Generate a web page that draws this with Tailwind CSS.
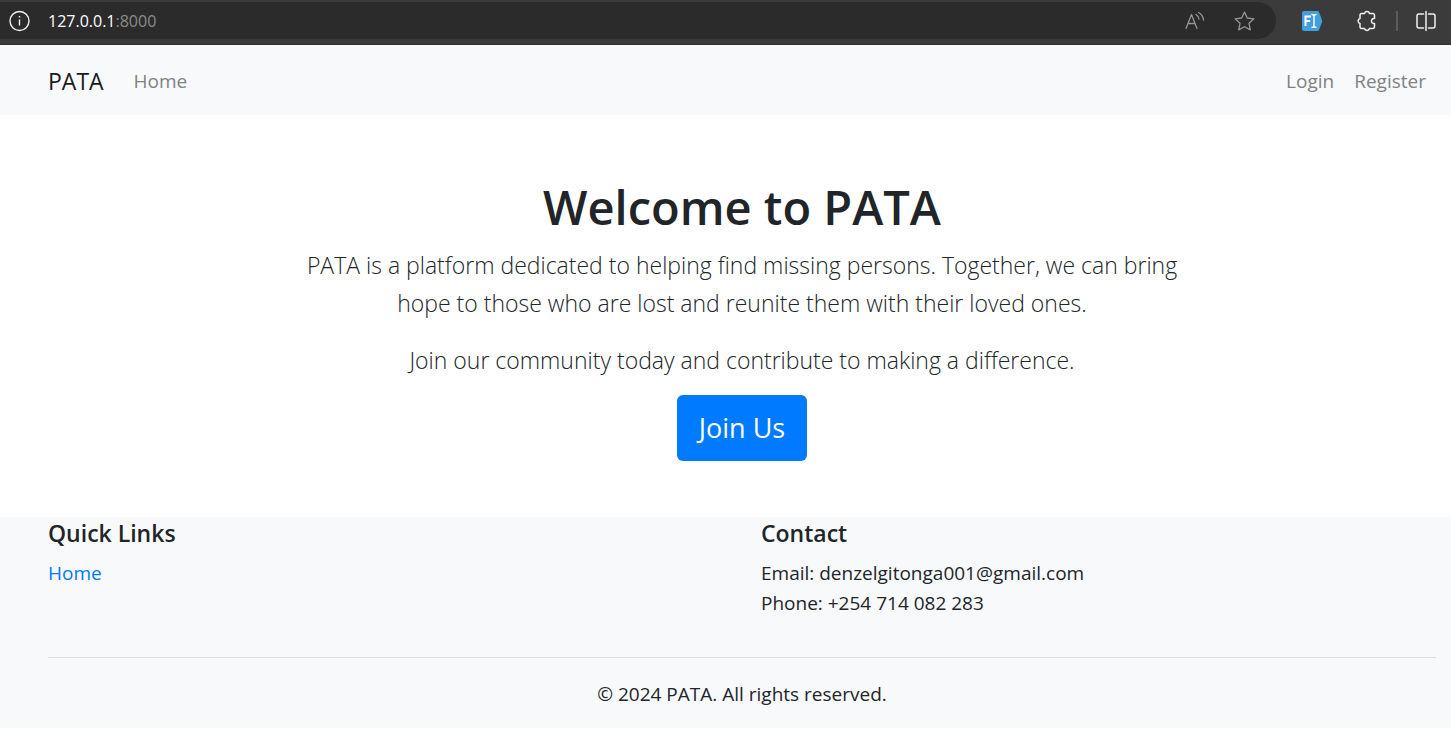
<!DOCTYPE html>
<html lang="en">
<head>
<meta charset="utf-8">
<title>PATA</title>
<script src="https://cdn.jsdelivr.net/npm/@tailwindcss/browser@4"></script>
</head>
<body class="bg-white font-['Segoe_UI','Open_Sans',sans-serif] text-[19px] leading-[30px] text-[#212529]">
  <div class="flex h-[45px] items-start justify-between border-b border-[#303030] bg-[#3b3b3b] pt-0.5 pr-3.5 text-[#f0f0f0]">
    <div class="flex h-[37px] grow items-center rounded-r-full bg-[#2b2b2b] pr-5 pl-2">
      <button type="button" aria-label="Site information">
        <svg class="size-[22px]" viewBox="0 0 22 22" fill="none" stroke="currentColor" stroke-width="1.4"><circle cx="11.500" cy="11" r="9.5"/><path d="M11.500 9.5v6M11.500 6v1.6"/></svg>
      </button>
      <div class="ml-[18px] grow text-base text-[#8c8c8c]"><span class="text-white">127.0.0.1</span>:8000</div>
      <button type="button" aria-label="Read aloud" class="text-[#959595]">
        <svg class="size-[22px]" viewBox="0 0 22 22" fill="none" stroke="currentColor" stroke-width="1.3" stroke-linecap="round" stroke-linejoin="round"><path d="M2 18.500 7.500 4.500 13 18.500M3.900 13.500h7.200M12 4.500q2.500 1.500 3 4.500M14.500 2.500q4.500 2.500 5 7.500"/></svg>
      </button>
      <button type="button" aria-label="Add to favorites" class="ml-7 text-[#959595]">
        <svg class="size-[22px]" viewBox="0 0 22 22" fill="none" stroke="currentColor" stroke-width="1.3" stroke-linejoin="round"><path d="m10.500 2 2.800 6 6.600.8-4.900 4.500 1.300 6.600-5.800-3.200-5.800 3.200 1.300-6.600L1.100 8.800l6.600-.8z"/></svg>
      </button>
    </div>
    <div class="flex h-[37px] items-center pl-[25px]">
      <button type="button" aria-label="Text tool">
        <svg class="size-[22px]" viewBox="0 0 22 22" fill="none"><path d="M3 1h13.500q1 0 1.500 1l3 8q.4 1 0 2l-3 8q-.5 1-1.500 1H3q-2 0-2-2V3q0-2 2-2z" fill="#419fdf"/><path d="M4.500 16V6.500H10M4.500 11h4.700" stroke="#fff" stroke-width="2"/><path d="M10.500 4.500q2.500 0 2.500 1.500 0-1.500 2.500-1.500M13 6v10M10.500 17.500q2.500 0 2.500-1.500 0 1.500 2.500 1.500" stroke="#fff" stroke-width="1.400"/></svg>
      </button>
      <button type="button" aria-label="Extensions" class="ml-[33px]">
        <svg class="size-[22px]" viewBox="0 0 22 22" fill="none" stroke="currentColor" stroke-width="1.500" stroke-linejoin="round"><path d="M5.500 3.500h3a2.600 2.600 0 0 1 5 0h3q2 0 2 2v3h-1.200a2.600 2.600 0 0 0 0 5h1.200v3q0 2-2 2h-3a2.600 2.600 0 0 1-5 0h-3q-1.500 0-1.500-2v-3a2.600 2.600 0 0 1 0-5v-3q0-2 1.500-2z"/></svg>
      </button>
      <span class="ml-[18px] h-5 w-0.5 bg-[#5c5c5c]"></span>
      <button type="button" aria-label="Split screen" class="ml-[17px]">
        <svg class="size-[22px]" viewBox="0 0 22 22" fill="none" stroke="currentColor" stroke-width="1.500" stroke-linecap="round"><path d="M8.500 18H4q-2 0-2-2V6q0-2 2-2h4.500M13.500 4H18q2 0 2 2v10q0 2-2 2h-4.500M11 1.500v19"/></svg>
      </button>
    </div>
  </div>

  <nav class="flex h-[70px] items-center bg-[#f8f9fb] pt-0.5 pr-[25px] pl-12 text-[#808182]">
    <a href="#" class="text-[23px] text-[#1a1a1b]">PATA</a>
    <a href="#" class="ml-[30px]">Home</a>
    <a href="#" class="ml-auto">Login</a>
    <a href="#" class="ml-5">Register</a>
  </nav>

  <main class="flex flex-col items-center pt-[62px] pr-[15px] pb-14 pl-12 text-center">
    <h1 class="mb-[9px] text-[47px] leading-[60px] font-semibold">Welcome to PATA</h1>
    <p class="mb-[19px] max-w-[900px] text-[23px] leading-[38px] font-light">PATA is a platform dedicated to helping find missing persons. Together, we can bring hope to those who are lost and reunite them with their loved ones.</p>
    <p class="mb-4 text-[23px] leading-[38px] font-light">Join our community today and contribute to making a difference.</p>
    <a href="#" class="rounded-md bg-[#007bff] px-[22px] py-3.5 text-[27px] leading-[38px] text-white">Join Us</a>
  </main>

  <footer class="bg-[#f8f9fb] pr-[15px] pb-[19px] pl-12">
    <div class="grid grid-cols-2 pb-[39px]">
      <section>
        <h2 class="mb-2.5 pt-px text-[23px] leading-[30px] font-semibold">Quick Links</h2>
        <a href="#" class="text-[#007bff]">Home</a>
      </section>
      <section class="pl-[19px]">
        <h2 class="mb-2.5 pt-px text-[23px] leading-[30px] font-semibold">Contact</h2>
        <p>Email: denzelgitonga001@gmail.com</p>
        <p>Phone: +254 714 082 283</p>
      </section>
    </div>
    <hr class="mb-[21px] border-[#dfe0e2]">
    <p class="text-center">© 2024 PATA. All rights reserved.</p>
  </footer>
</body>
</html>
